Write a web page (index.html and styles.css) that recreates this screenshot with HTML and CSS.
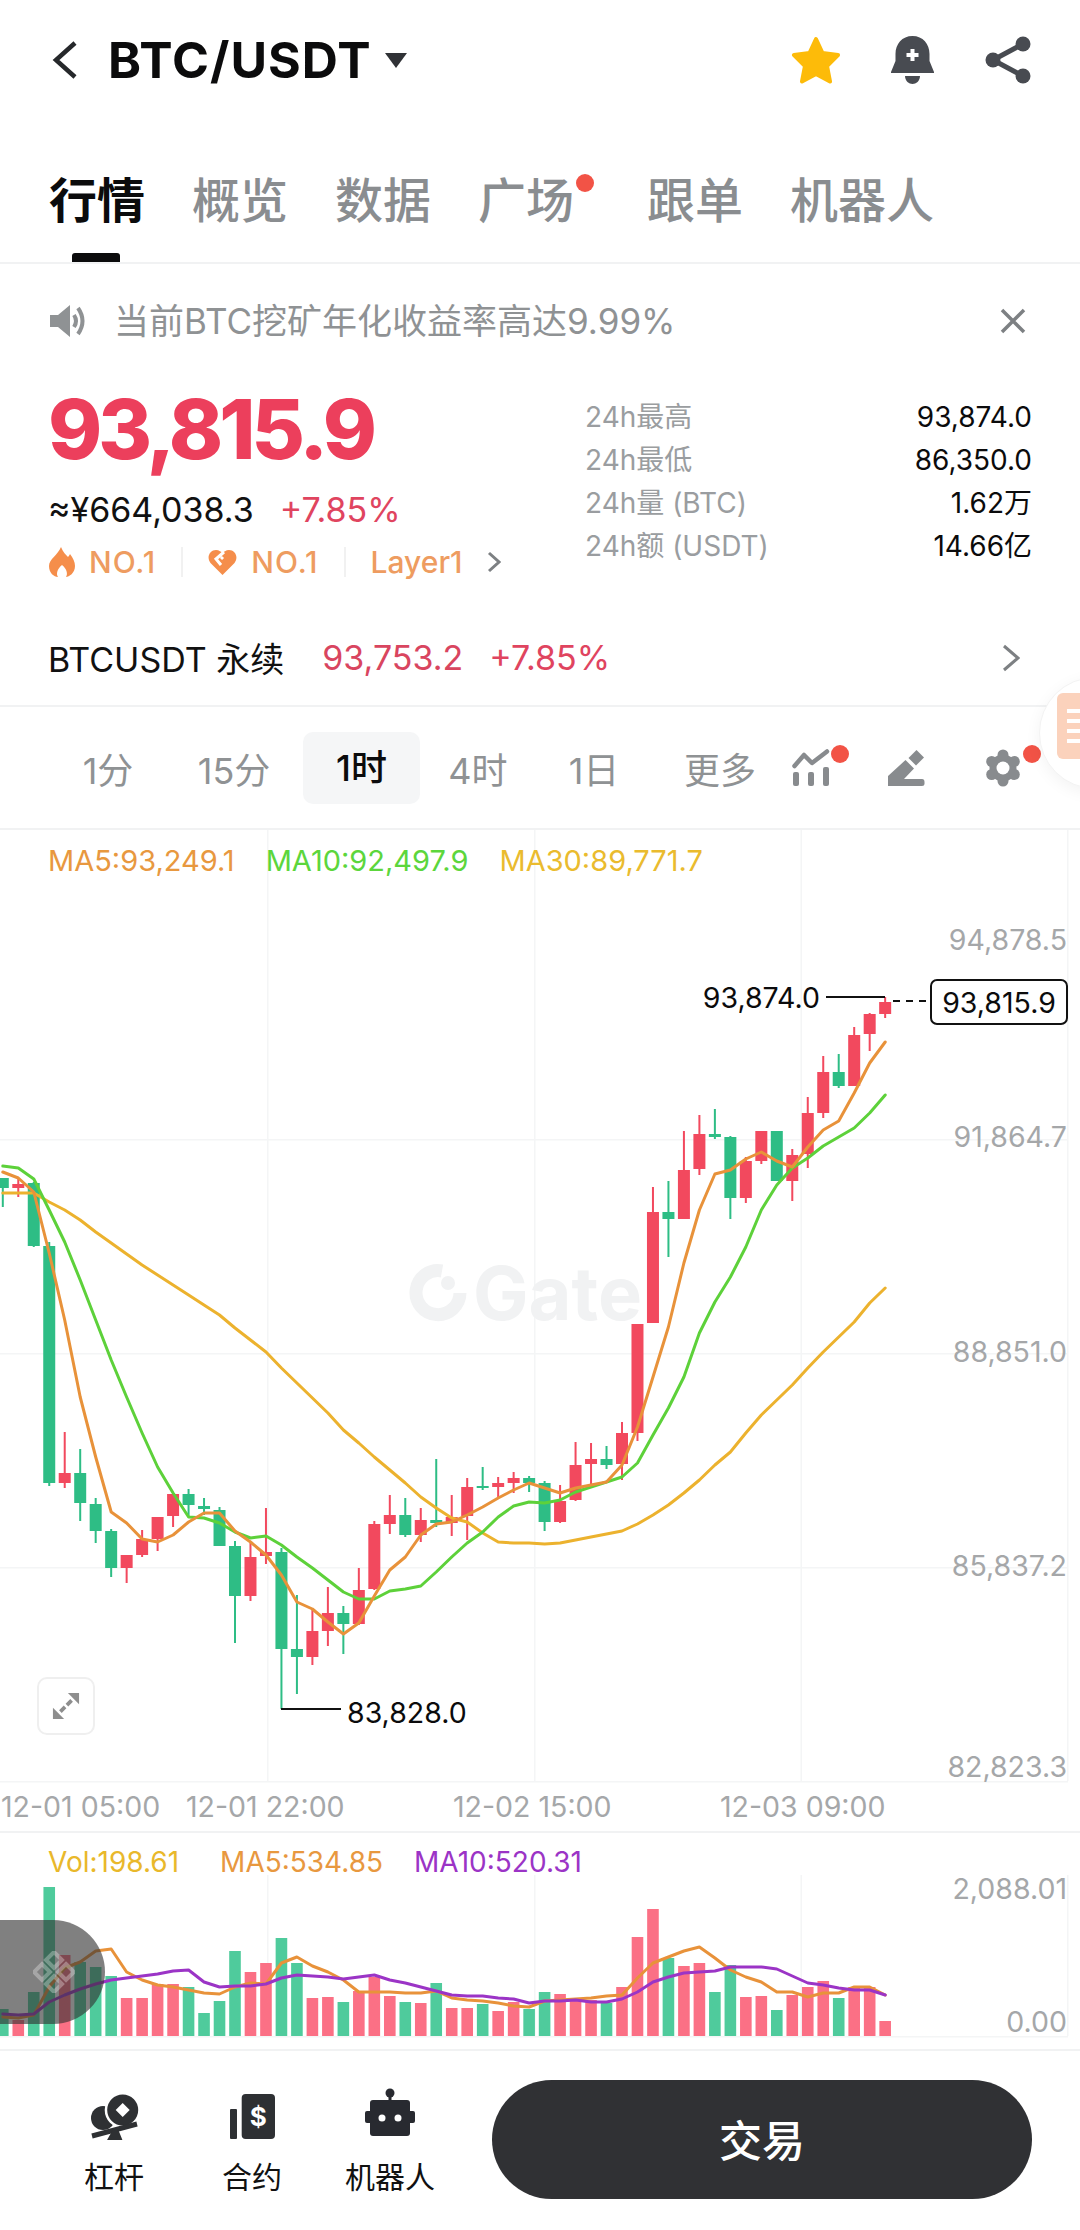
FILE: index.html
```html
<!DOCTYPE html>
<html lang="zh-CN">
<head>
  <meta charset="UTF-8" />
  <meta name="viewport" content="width=device-width, initial-scale=1.0" />
  <title>BTC/USDT</title>
  <link rel="stylesheet" href="styles.css">
</head>
<body>
  <div class="page">
    <header class="topbar">
      <svg class="back-icon" viewBox="0 0 24 38"><path d="M22 2 L3 19 L22 36" /></svg>
      <h1 class="pair">BTC/USDT</h1>
      <span class="caret"></span>
      <div class="topbar-icons">
        <svg class="star-icon" viewBox="0 0 50 48"><path d="M25 3 L31.500 17 L47 19 L36 30 L39 45.500 L25 38 L11 45.500 L14 30 L3 19 L18.500 17 Z" /></svg>
        <svg class="bell-icon" viewBox="0 0 43 48">
          <path d="M21.500 0 C11 0 4.500 8 4.500 18 V25 L0 36 V37 H43 V36 L38.500 25 V18 C38.500 8 32 0 21.500 0 Z" />
          <path d="M14 40 H29 C29 45 25 48 21.500 48 C18 48 14 45 14 40 Z" />
          <path class="bell-plus" d="M21.500 13 V25 M15.500 19 H27.500" />
        </svg>
        <svg class="share-icon" viewBox="0 0 46 48">
          <path class="share-line" d="M38 8 L8 24 L38 40" />
          <circle cx="38" cy="8" r="7.500" />
          <circle cx="8" cy="24" r="7.500" />
          <circle cx="38" cy="40" r="7.500" />
        </svg>
      </div>
    </header>

    <nav class="tabs">
      <span class="tab active">行情</span>
      <span class="tab">概览</span>
      <span class="tab">数据</span>
      <span class="tab has-dot">广场</span>
      <span class="tab">跟单</span>
      <span class="tab">机器人</span>
    </nav>

    <div class="notice">
      <svg class="speaker-icon" viewBox="0 0 37 34">
        <path d="M0 11 H8 L20 1 V33 L8 23 H0 Z" />
        <path class="wave" d="M24 11 Q28 17 24 23 M28 4 Q37 17 28 30" />
      </svg>
      <span class="notice-text">当前BTC挖矿年化收益率高达9.99%</span>
      <svg class="close-icon" viewBox="0 0 26 26"><path d="M2 2 L24 24 M24 2 L2 24" /></svg>
    </div>

    <section class="ticker">
      <div class="ticker-left">
        <div class="last-price">93,815.9</div>
        <div class="sub-price">
          <span>≈¥664,038.3</span>
          <span class="change">+7.85%</span>
        </div>
        <div class="tags">
          <svg class="flame-icon" viewBox="0 0 26 30"><path d="M12 0 C14 5 17 8 19 10 C20 9 20.500 8 21 7 C24 11 26 15 26 19 C26 26 20 30 17 30 C19 27 18 22 13 18 C8 22 7 27 9 30 C5 30 0 26 0 19 C0 12 9 8 12 0 Z" /></svg>
          <span class="tag-text rank">NO.1</span>
          <i class="tag-sep"></i>
          <svg class="heart-icon" viewBox="0 0 29 27">
            <path d="M14.500 26 L2.500 14 C-2 8 2 1 8 1 C11 1 13.500 3 14.500 4 C15.500 3 18 1 21 1 C27 1 31 8 26.500 14 Z" />
            <path class="heart-cut" d="M16 3 L8 10 L13 16 M13 10 L15 8" />
          </svg>
          <span class="tag-text rank">NO.1</span>
          <i class="tag-sep"></i>
          <span class="tag-text">Layer1</span>
          <svg class="tag-more" viewBox="0 0 14 22"><path d="M2 2 L12 11 L2 20" /></svg>
        </div>
      </div>
      <dl class="stats">
        <div class="stat"><dt>24h最高</dt><dd>93,874.0</dd></div>
        <div class="stat"><dt>24h最低</dt><dd>86,350.0</dd></div>
        <div class="stat"><dt>24h量 (BTC)</dt><dd>1.62万</dd></div>
        <div class="stat"><dt>24h额 (USDT)</dt><dd>14.66亿</dd></div>
      </dl>
    </section>

    <div class="perp">
      <span class="perp-name">BTCUSDT 永续</span>
      <span class="perp-price">93,753.2</span>
      <span class="perp-change">+7.85%</span>
      <svg class="perp-more" viewBox="0 0 18 28"><path d="M2 2 L16 14 L2 26" /></svg>
    </div>

    <div class="periods">
      <span class="period w-126">1分</span>
      <span class="period w-126">15分</span>
      <span class="period active">1时</span>
      <span class="period w-116">4时</span>
      <span class="period w-116">1日</span>
      <span class="period w-136">更多</span>
      <div class="tools">
        <span class="tool has-dot">
          <svg viewBox="0 0 38 38">
            <path class="tool-line" d="M2.500 17 L12 6 L20 14 L35 2.500" />
            <rect x="1" y="23" width="6" height="14" rx="2" />
            <rect x="16" y="23" width="6" height="14" rx="2" />
            <rect x="31" y="18" width="6" height="19" rx="2" />
          </svg>
        </span>
        <span class="tool">
          <svg viewBox="0 0 38 38">
            <path d="M20.500 9 L28.500 1 L36 8.500 L28 16.500 Z" />
            <path d="M0 37 V27 L17.500 11 L26 19.500 L16 30 H34 Q36.500 30 36.500 33 V35 Q36.500 37 34 37 Z" />
          </svg>
        </span>
        <span class="tool has-dot">
          <svg viewBox="0 0 38 38">
            <circle cx="19" cy="19" r="13.500" />
            <circle cx="19" cy="6" r="5.500" />
            <circle cx="19" cy="32" r="5.500" />
            <circle cx="7.700" cy="12.500" r="5.500" />
            <circle cx="30.300" cy="12.500" r="5.500" />
            <circle cx="7.700" cy="25.500" r="5.500" />
            <circle cx="30.300" cy="25.500" r="5.500" />
            <circle class="gear-hole" cx="19" cy="19" r="6.500" />
          </svg>
        </span>
      </div>
    </div>

    <section class="chart-main">
      <svg id="priceChart" class="chart-svg" viewBox="0 830 1080 1001"></svg>
      <div class="legend">
        <span class="c-ma5">MA5:93,249.1</span>
        <span class="c-ma10">MA10:92,497.9</span>
        <span class="c-ma30">MA30:89,771.7</span>
      </div>
      <button class="expand">
        <svg viewBox="0 0 30 30">
          <path d="M29 1 H17 L29 13 Z" />
          <path d="M1 29 H13 L1 17 Z" />
          <path class="expand-line" d="M21 9 L16 14 M9 21 L14 16" />
        </svg>
      </button>
    </section>

    <section class="chart-vol">
      <svg id="volumeChart" class="chart-svg" viewBox="0 1833 1080 216"></svg>
      <div class="legend vol-legend">
        <span class="c-vol">Vol:198.61</span>
        <span class="c-ma5">MA5:534.85</span>
        <span class="c-purple">MA10:520.31</span>
      </div>
      <div class="float-pill">
        <svg viewBox="0 0 42 42">
          <path d="M21 1 L29 9 L21 17 L13 9 Z M21 25 L29 33 L21 41 L13 33 Z M9 13 L17 21 L9 29 L1 21 Z M33 13 L41 21 L33 29 L25 21 Z" />
        </svg>
      </div>
    </section>

    <footer class="bottom-nav">
      <div class="nav-item">
        <svg viewBox="0 0 52 52">
          <circle cx="15" cy="30" r="12" />
          <circle class="knock" cx="34.700" cy="22" r="18" />
          <circle cx="34.700" cy="22" r="15.500" />
          <path class="knock" d="M34.700 15 L41.700 22 L34.700 29 L27.700 22 Z" />
          <path class="plank" d="M4 48 L49 36" />
          <path d="M24.700 42 L18.700 52.700 H34.700 L30 41 Z" />
        </svg>
        <span>杠杆</span>
      </div>
      <div class="nav-item">
        <svg viewBox="0 0 52 52">
          <rect x="4" y="21" width="7" height="30" rx="1" />
          <rect x="15.700" y="6" width="33.300" height="45" rx="4" />
          <text class="dollar" x="32.300" y="38">$</text>
        </svg>
        <span>合约</span>
      </div>
      <div class="nav-item">
        <svg class="robot" viewBox="0 0 52 52">
          <circle cx="26" cy="5" r="4.500" />
          <rect x="24.500" y="6" width="3" height="8" />
          <rect x="6" y="12" width="40" height="36" rx="3" />
          <rect x="1" y="23" width="50" height="12" rx="2" />
          <circle class="knock" cx="18" cy="30" r="3.500" />
          <circle class="knock" cx="34" cy="30" r="3.500" />
        </svg>
        <span>机器人</span>
      </div>
      <button class="trade-btn">交易</button>
    </footer>

    <div class="float-widget">
      <div class="float-doc"><i></i><i></i><i></i><i></i></div>
    </div>
  </div>

  <script src="chart.js"></script>
</body>
</html>
```

FILE: styles.css
```css
* {
  box-sizing: border-box;
  margin: 0;
  padding: 0;
}

body {
  background: #fff;
  font-family: Inter, 'Noto Sans CJK SC', sans-serif;
  color: #111;
}

.page {
  position: relative;
  width: 1080px;
  height: 2230px;
  overflow: hidden;
}

/* top bar */
.topbar {
  display: flex;
  align-items: center;
  height: 120px;
  padding: 0 49px 0 52px;
}

.back-icon {
  width: 26px;
  height: 38px;
  fill: none;
  stroke: #26282b;
  stroke-width: 4.5;
  margin-right: 30px;
}

.pair {
  font-size: 50px;
  font-weight: 700;
  letter-spacing: 1px;
  color: #0b0b0c;
}

.caret {
  width: 0;
  height: 0;
  margin-left: 13px;
  border-left: 11px solid transparent;
  border-right: 11px solid transparent;
  border-top: 15px solid #303236;
}

.topbar-icons {
  display: flex;
  align-items: center;
  margin-left: auto;
}

.star-icon {
  width: 50px;
  height: 48px;
  fill: #fdbb09;
  stroke: #fdbb09;
  stroke-width: 4;
  stroke-linejoin: round;
}

.bell-icon {
  width: 43px;
  height: 48px;
  margin-left: 50px;
  fill: #484b51;
}

.bell-plus {
  fill: none;
  stroke: #fff;
  stroke-width: 4;
}

.share-icon {
  width: 46px;
  height: 48px;
  margin-left: 51px;
  fill: #484b51;
}

.share-line {
  fill: none;
  stroke: #484b51;
  stroke-width: 5;
}

/* tabs */
.tabs {
  display: flex;
  height: 144px;
  padding: 55px 0 0 49px;
  gap: 47px;
  border-bottom: 2px solid #f1f2f3;
}

.tab {
  position: relative;
  height: 52px;
  font-size: 48px;
  line-height: 52px;
  font-weight: 500;
  color: #8a8d90;
}

.tab.active {
  font-weight: 700;
  color: #0b0b0c;
}

.tab.active::after {
  content: "";
  position: absolute;
  left: 23px;
  top: 78px;
  width: 48px;
  height: 9px;
  border-radius: 3px 3px 0 0;
  background: #0b0b0c;
}

.tab.has-dot {
  margin-right: 26px;
}

.tab.has-dot::after {
  content: "";
  position: absolute;
  left: 98px;
  top: -1px;
  width: 18px;
  height: 18px;
  border-radius: 50%;
  background: #f25346;
}

/* notice */
.notice {
  display: flex;
  align-items: center;
  height: 114px;
  padding: 0 54px 0 50px;
}

.speaker-icon {
  width: 37px;
  height: 34px;
  fill: #8f9294;
  margin-right: 27px;
}

.wave {
  fill: none;
  stroke: #8f9294;
  stroke-width: 4;
}

.notice-text {
  margin-bottom: 6px;
  font-size: 35px;
  color: #8f9294;
}

.close-icon {
  width: 26px;
  height: 26px;
  margin-left: auto;
  fill: none;
  stroke: #7d8083;
  stroke-width: 3.5;
}

/* price block */
.ticker {
  display: flex;
  height: 232px;
}

.ticker-left {
  width: 585px;
  padding: 2px 0 0 48px;
}

.last-price {
  height: 100px;
  font-size: 82px;
  line-height: 100px;
  font-weight: 800;
  letter-spacing: -4px;
  color: #ec3f5c;
}

.sub-price {
  display: flex;
  gap: 26px;
  margin-top: 10px;
  height: 40px;
  font-size: 34px;
  line-height: 40px;
}

.change {
  color: #e0445f;
}

.tags {
  display: flex;
  align-items: center;
  height: 40px;
  margin-top: 12px;
  padding-left: 1px;
  color: #ee9c60;
}

.flame-icon {
  width: 26px;
  height: 30px;
  fill: #f58e4b;
}

.heart-icon {
  width: 29px;
  height: 27px;
  fill: #f58e4b;
}

.heart-cut {
  fill: none;
  stroke: #fff;
  stroke-width: 3;
}

.tag-text {
  margin-left: 14px;
  font-size: 30px;
  font-weight: 500;
}

.tag-text.rank {
  letter-spacing: 1px;
}

.tag-sep {
  width: 2px;
  height: 30px;
  margin: 0 25px;
  background: #f1f1f1;
}

.tag-sep + .tag-text {
  margin-left: 0;
}

.tag-more {
  width: 14px;
  height: 22px;
  margin-left: 25px;
  fill: none;
  stroke: #7d8083;
  stroke-width: 3;
}

.stats {
  width: 447px;
  padding-top: 18px;
}

.stat {
  display: flex;
  justify-content: space-between;
  height: 43px;
  font-size: 28px;
  line-height: 43px;
}

.stat dt {
  color: #9a9da0;
}

.stat dd {
  color: #0b0b0c;
}

/* perpetual row */
.perp {
  display: flex;
  align-items: center;
  height: 97px;
  padding: 0 60px 0 48px;
  border-bottom: 2px solid #f1f2f3;
  font-size: 34px;
}

.perp-price {
  margin-left: 38px;
  color: #d9455f;
}

.perp-change {
  margin-left: 26px;
  color: #e0445f;
}

.perp-more {
  width: 18px;
  height: 28px;
  margin-left: auto;
  fill: none;
  stroke: #7d8083;
  stroke-width: 3;
}

/* timeframe row */
.periods {
  display: flex;
  align-items: center;
  height: 123px;
  padding: 0 58px 0 45px;
  border-bottom: 2px solid #f1f2f3;
}

.period {
  text-align: center;
  font-size: 36px;
  color: #8f9294;
}

.w-126 {
  width: 126px;
}

.w-116 {
  width: 116px;
}

.w-136 {
  width: 136px;
}

.period.active {
  width: 117px;
  height: 72px;
  margin-left: 6px;
  border-radius: 10px;
  line-height: 72px;
  font-weight: 500;
  color: #0b0b0c;
  background: #f5f6f7;
}

.tools {
  display: flex;
  gap: 58px;
  margin-left: auto;
}

.tool {
  position: relative;
  display: block;
  width: 38px;
  height: 38px;
}

.tool svg {
  display: block;
  fill: #888b8e;
}

.tool-line {
  fill: none;
  stroke: #888b8e;
  stroke-width: 4.5;
  stroke-linecap: round;
  stroke-linejoin: round;
}

.gear-hole {
  fill: #fff;
}

.tool.has-dot::after {
  content: "";
  position: absolute;
  left: 39px;
  top: -4px;
  width: 18px;
  height: 18px;
  border-radius: 50%;
  background: #f25346;
}

/* chart panes */
.chart-main {
  position: relative;
  height: 1003px;
  border-bottom: 2px solid #f1f2f3;
}

.chart-vol {
  position: relative;
  height: 218px;
  border-bottom: 2px solid #f1f2f3;
}

.chart-svg {
  position: absolute;
  left: 0;
  top: 0;
  width: 1080px;
  height: 100%;
}

.legend {
  position: relative;
  display: flex;
  gap: 31px;
  padding: 14px 0 0 48px;
  font-size: 29px;
  line-height: 34px;
}

.vol-legend {
  padding-top: 12px;
  font-size: 28px;
}

.vol-legend .c-vol {
  margin-right: 10px;
}

.c-ma5 {
  color: #e8983f;
}

.c-ma10 {
  color: #5cd63c;
}

.c-ma30 {
  color: #eabb2e;
}

.c-vol {
  color: #e9b82b;
}

.c-purple {
  color: #9b34c6;
}

.axis-text {
  font-family: Inter, sans-serif;
  font-size: 28.500px;
  fill: #a5a7a9;
}

.mark-text {
  font-family: Inter, sans-serif;
  font-size: 28.500px;
  fill: #0b0b0c;
}

.watermark {
  font-family: Inter, sans-serif;
  font-size: 74px;
  font-weight: 700;
  fill: #f1f2f3;
}

.expand {
  position: absolute;
  left: 37px;
  top: 847px;
  display: flex;
  align-items: center;
  justify-content: center;
  width: 58px;
  height: 58px;
  border: 2px solid #efefef;
  border-radius: 10px;
  background: #fff;
}

.expand svg {
  width: 28px;
  height: 28px;
  fill: #8e8e8e;
}

.expand-line {
  fill: none;
  stroke: #8e8e8e;
  stroke-width: 4;
}

.float-pill {
  position: absolute;
  left: 0;
  top: 87px;
  display: flex;
  align-items: center;
  justify-content: center;
  width: 105px;
  height: 104px;
  padding-left: 2px;
  border-radius: 0 52px 52px 0;
  background: rgba(50, 50, 50, 0.62);
}

.float-pill svg {
  width: 42px;
  height: 42px;
  fill: none;
  stroke: rgba(255, 255, 255, 0.3);
  stroke-width: 4;
}

/* bottom nav */
.bottom-nav {
  display: flex;
  height: 179px;
  padding-left: 45px;
}

.nav-item {
  display: flex;
  flex-direction: column;
  align-items: center;
  width: 138px;
  padding-top: 37px;
  font-size: 30px;
  line-height: 40px;
  color: #111;
}

.nav-item svg {
  width: 52px;
  height: 52px;
  margin-bottom: 17px;
  fill: #2e3033;
}

.nav-item .robot {
  fill: #282a30;
}

.knock {
  fill: #fff;
}

.plank {
  fill: none;
  stroke: #2e3033;
  stroke-width: 5;
}

.dollar {
  font-family: Inter, sans-serif;
  font-size: 26px;
  font-weight: 700;
  text-anchor: middle;
  fill: #fff;
}

.trade-btn {
  width: 540px;
  height: 119px;
  margin: 29px 0 0 33px;
  padding-bottom: 4px;
  border: none;
  border-radius: 60px;
  background: #303134;
  color: #fff;
  font-family: inherit;
  font-size: 43px;
  font-weight: 500;
}

/* floating shortcut on the right edge */
.float-widget {
  position: absolute;
  left: 1039px;
  top: 677px;
  width: 112px;
  height: 112px;
  border: 1px solid #f3f3f3;
  border-radius: 50%;
  background: #fff;
  box-shadow: 0 4px 16px rgba(0, 0, 0, 0.05);
}

.float-doc {
  display: flex;
  flex-direction: column;
  gap: 6px;
  margin: 15px 0 0 17px;
  width: 60px;
  height: 66px;
  padding: 16px 0 0 10px;
  border-radius: 6px;
  background: #fbd2bc;
}

.float-doc i {
  display: block;
  height: 4px;
  background: #fff;
}
```

FILE: chart.js
```js
const NS = "http://www.w3.org/2000/svg";
const STEP = 15.48;
const X0 = 2.8;
const UP = "#f2495e";
const DOWN = "#2ebd85";
const UP_BAR = "#fb7085";
const DOWN_BAR = "#4fcb9c";

// g/r, wick top, body top, body bottom, wick bottom (all in page px)
const candles = [
  ["g", 1178, 1178, 1188, 1207], ["r", 1178, 1184, 1188, 1197], ["g", 1182, 1183, 1246, 1247],
  ["g", 1242, 1246, 1483, 1486], ["r", 1432, 1473, 1483, 1488], ["g", 1449, 1473, 1503, 1521],
  ["g", 1498, 1504, 1531, 1543], ["g", 1529, 1531, 1568, 1577], ["r", 1555, 1555, 1568, 1583],
  ["r", 1530, 1539, 1555, 1557], ["r", 1517, 1517, 1539, 1551], ["r", 1494, 1494, 1516, 1527],
  ["g", 1489, 1494, 1505, 1517], ["g", 1498, 1506, 1509, 1515], ["g", 1507, 1510, 1546, 1546],
  ["g", 1541, 1546, 1596, 1643], ["r", 1543, 1557, 1596, 1601], ["r", 1508, 1552, 1556, 1564],
  ["g", 1548, 1552, 1649, 1709], ["g", 1595, 1649, 1657, 1694], ["r", 1610, 1631, 1657, 1665],
  ["r", 1587, 1613, 1631, 1646], ["g", 1606, 1613, 1624, 1654], ["r", 1568, 1590, 1624, 1625],
  ["r", 1521, 1524, 1589, 1590], ["r", 1495, 1515, 1524, 1534], ["g", 1498, 1515, 1535, 1537],
  ["r", 1508, 1520, 1535, 1542], ["g", 1459, 1520, 1523, 1527], ["r", 1495, 1517, 1523, 1536],
  ["r", 1478, 1487, 1516, 1540], ["g", 1467, 1486, 1488, 1490], ["r", 1477, 1483, 1487, 1497],
  ["r", 1472, 1478, 1483, 1493], ["g", 1476, 1478, 1483, 1492], ["g", 1481, 1483, 1522, 1531],
  ["r", 1485, 1501, 1522, 1523], ["r", 1442, 1465, 1500, 1501], ["r", 1443, 1459, 1464, 1484],
  ["g", 1446, 1459, 1465, 1469], ["r", 1422, 1433, 1464, 1480], ["r", 1324, 1324, 1433, 1441],
  ["r", 1187, 1212, 1323, 1323], ["g", 1181, 1212, 1219, 1257], ["r", 1131, 1170, 1219, 1219],
  ["r", 1115, 1134, 1169, 1175], ["g", 1109, 1134, 1137, 1139], ["g", 1136, 1137, 1198, 1219],
  ["r", 1157, 1161, 1198, 1203], ["r", 1131, 1131, 1161, 1164], ["g", 1131, 1131, 1181, 1181],
  ["r", 1149, 1155, 1181, 1201], ["r", 1097, 1113, 1154, 1168], ["r", 1056, 1072, 1113, 1118],
  ["g", 1054, 1072, 1086, 1088], ["r", 1027, 1035, 1086, 1086], ["r", 1013, 1014, 1034, 1051],
  ["r", 997, 1002, 1014, 1018]
];

const ma5 = [1172, 1178, 1192, 1253, 1320, 1397, 1457, 1512, 1523, 1539,
  1542, 1535, 1522, 1513, 1513, 1531, 1542, 1555, 1575, 1602,
  1609, 1622, 1634, 1623, 1596, 1570, 1557, 1535, 1524, 1522,
  1515, 1507, 1498, 1490, 1483, 1488, 1493, 1488, 1485, 1482,
  1465, 1427, 1377, 1327, 1263, 1210, 1174, 1170, 1159, 1152,
  1161, 1167, 1147, 1130, 1121, 1093, 1063, 1042];

const ma10 = [1166, 1168, 1179, 1210, 1242, 1280, 1320, 1360, 1397, 1433,
  1467, 1493, 1517, 1518, 1523, 1532, 1538, 1536, 1545, 1557,
  1568, 1580, 1592, 1599, 1599, 1591, 1589, 1586, 1572, 1557,
  1543, 1532, 1517, 1506, 1502, 1503, 1500, 1492, 1487, 1482,
  1477, 1463, 1435, 1408, 1377, 1333, 1302, 1277, 1247, 1210,
  1185, 1168, 1158, 1146, 1137, 1128, 1113, 1095];

const ma30 = [1193, 1193, 1193, 1202, 1210, 1220, 1232, 1243, 1254, 1265,
  1275, 1285, 1295, 1305, 1315, 1328, 1340, 1352, 1368, 1383,
  1398, 1413, 1430, 1443, 1457, 1470, 1483, 1497, 1508, 1518,
  1522, 1533, 1542, 1543, 1543, 1544, 1543, 1540, 1537, 1534,
  1531, 1524, 1515, 1505, 1493, 1480, 1465, 1452, 1433, 1415,
  1400, 1385, 1368, 1352, 1337, 1322, 1303, 1288];

const volTops = [2009, 2020, 1992, 1887, 1955, 1962, 1967, 1976, 1998, 1998,
  1984, 1984, 1987, 2013, 2001, 1951, 1972, 1963, 1938, 1963,
  1998, 1997, 2002, 1991, 1977, 1996, 2002, 2003, 1983, 2008,
  2008, 2004, 2011, 2002, 2009, 1992, 1994, 1998, 2000, 2003,
  1987, 1937, 1909, 1958, 1966, 1963, 1992, 1965, 1997, 1996,
  2010, 1995, 1987, 1981, 1998, 1987, 1987, 2021];

const volMa5 = [2017, 2018, 2015, 1987, 1968, 1962, 1951, 1949, 1972, 1980,
  1985, 1987, 1990, 1993, 1994, 1987, 1983, 1984, 1963, 1957,
  1966, 1972, 1980, 1992, 1992, 1992, 1993, 1993, 1991, 1998,
  2000, 2001, 2003, 2006, 2007, 2001, 2000, 1999, 1998, 1996,
  1995, 1978, 1963, 1957, 1951, 1947, 1958, 1970, 1977, 1982,
  1992, 1992, 1997, 1993, 1993, 1987, 1987, 1995];

const volMa10 = [2014, 2015, 2014, 2002, 1995, 1989, 1984, 1980, 1978, 1976,
  1974, 1971, 1970, 1982, 1987, 1986, 1986, 1984, 1978, 1975,
  1976, 1977, 1979, 1977, 1975, 1980, 1983, 1987, 1991, 1995,
  1996, 1996, 1998, 1999, 2003, 2001, 2001, 2000, 2002, 2002,
  1999, 1992, 1982, 1977, 1973, 1972, 1971, 1967, 1967, 1967,
  1969, 1976, 1983, 1985, 1988, 1990, 1990, 1995];

function el(parent, tag, attrs, text) {
  const node = document.createElementNS(NS, tag);
  for (const key in attrs) node.setAttribute(key, attrs[key]);
  if (text) node.textContent = text;
  parent.appendChild(node);
  return node;
}

function cx(i) {
  return X0 + STEP * i;
}

function drawLine(svg, values, color, width) {
  const points = values.map((y, i) => cx(i).toFixed(1) + "," + y).join(" ");
  el(svg, "polyline", {
    points,
    fill: "none",
    stroke: color,
    "stroke-width": width,
    "stroke-linejoin": "round",
    "stroke-linecap": "round"
  });
}

function drawGrid(svg, rows, top, bottom) {
  rows.forEach((y) => {
    el(svg, "rect", { x: 0, y, width: 1068, height: 1.5, fill: "#f4f5f6" });
  });
  [267, 534, 800.5, 1067].forEach((x) => {
    el(svg, "rect", { x, y: top, width: 1.5, height: bottom - top, fill: "#f4f5f6" });
  });
}

function axisLabel(svg, text, y) {
  el(svg, "text", { class: "axis-text", x: 1067, y: y + 10, "text-anchor": "end" }, text);
}

function drawPriceChart() {
  const svg = document.getElementById("priceChart");
  drawGrid(svg, [1139, 1353, 1567, 1781], 830, 1781);

  // faint logo behind the candles
  el(svg, "path", {
    d: "M442 1271 A22 22 0 1 0 460 1293",
    fill: "none",
    stroke: "#f1f2f3",
    "stroke-width": 13
  });
  el(svg, "circle", { cx: 448, cy: 1283, r: 7, fill: "#f1f2f3" });
  el(svg, "text", { class: "watermark", x: 473, y: 1320 }, "Gate");

  candles.forEach((c, i) => {
    const color = c[0] === "r" ? UP : DOWN;
    const x = cx(i);
    el(svg, "rect", { x: x - 1, y: c[1], width: 2, height: c[4] - c[1], fill: color });
    el(svg, "rect", { x: x - 6, y: c[2], width: 12, height: c[3] - c[2], fill: color });
  });

  drawLine(svg, ma30, "#ecb22e", 3);
  drawLine(svg, ma10, "#5dd13a", 3);
  drawLine(svg, ma5, "#e8923a", 3);

  ["94,878.5", "91,864.7", "88,851.0", "85,837.2", "82,823.3"].forEach((label, i) => {
    axisLabel(svg, label, [940, 1137, 1352, 1566, 1767][i]);
  });

  [["12-01 05:00", 1], ["12-01 22:00", 186], ["12-02 15:00", 453], ["12-03 09:00", 720]].forEach((t) => {
    el(svg, "text", { class: "axis-text", x: t[1], y: 1817 }, t[0]);
  });

  // highest price mark
  el(svg, "rect", { x: 826, y: 996, width: 59, height: 2, fill: "#111" });
  el(svg, "text", { class: "mark-text", x: 820, y: 1008, "text-anchor": "end" }, "93,874.0");

  // last price tag
  el(svg, "line", {
    x1: 893, y1: 1001, x2: 930, y2: 1001,
    stroke: "#111", "stroke-width": 2, "stroke-dasharray": "7 6"
  });
  el(svg, "rect", { x: 931, y: 980, width: 136, height: 44, rx: 6, fill: "#fff", stroke: "#111", "stroke-width": 2 });
  el(svg, "text", { class: "mark-text", x: 999, y: 1013, "text-anchor": "middle" }, "93,815.9");

  // lowest price mark
  el(svg, "rect", { x: 281, y: 1708, width: 60, height: 2, fill: "#111" });
  el(svg, "text", { class: "mark-text", x: 347, y: 1723 }, "83,828.0");
}

function drawVolumeChart() {
  const svg = document.getElementById("volumeChart");
  drawGrid(svg, [2036], 1875, 2036);

  volTops.forEach((top, i) => {
    el(svg, "rect", {
      x: cx(i) - 5.8,
      y: top,
      width: 11.6,
      height: 2036 - top,
      fill: candles[i][0] === "r" ? UP_BAR : DOWN_BAR
    });
  });

  drawLine(svg, volMa5, "#e8923a", 3);
  drawLine(svg, volMa10, "#9b34c6", 3);

  axisLabel(svg, "2,088.01", 1889);
  axisLabel(svg, "0.00", 2022);
}

drawPriceChart();
drawVolumeChart();
```
